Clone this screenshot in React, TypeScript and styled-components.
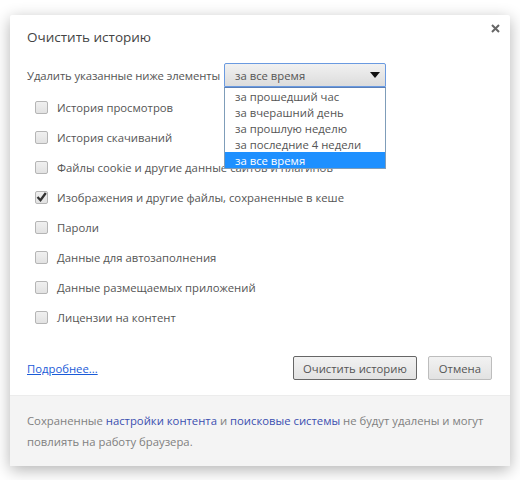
import { createGlobalStyle, styled } from 'styled-components'

const FONT = '"Open Sans", "Noto Sans", sans-serif'

const GlobalStyle = createGlobalStyle`
    html, body {
        margin: 0;
        background: #fff;
    }
    body {
        width: 520px;
        height: 480px;
        overflow: hidden;
        font-family: ${FONT};
    }
`

const items = [
    { label: 'История просмотров' },
    { label: 'История скачиваний' },
    { label: 'Файлы cookie и другие данные сайтов и плагинов' },
    { label: 'Изображения и другие файлы, сохраненные в кеше', checked: true },
    { label: 'Пароли' },
    { label: 'Данные для автозаполнения' },
    { label: 'Данные размещаемых приложений' },
    { label: 'Лицензии на контент' },
]

const periods = ['за прошедший час', 'за вчерашний день', 'за прошлую неделю', 'за последние 4 недели', 'за все время']

export default function App() {
    return (
        <Page>
            <GlobalStyle />
            <Dialog>
                <Close aria-label="Закрыть">
                    <svg width="9" height="9" viewBox="0 0 9 9">
                        <path d="M1 1l7 7M8 1L1 8" stroke="#666" strokeWidth="2" fill="none" />
                    </svg>
                </Close>
                <Body>
                    <Title>Очистить историю</Title>
                    <RangeRow>
                        <RangeLabel>Удалить указанные ниже элементы</RangeLabel>
                        <SelectWrap>
                            <SelectBox>
                                за все время
                                <svg width="10" height="6" viewBox="0 0 10 6">
                                    <path d="M0 0h10L5 6z" fill="#111" />
                                </svg>
                            </SelectBox>
                            <Menu>
                                {periods.map((p, i) => (
                                    <MenuItem key={p} $active={i === periods.length - 1}>
                                        {p}
                                    </MenuItem>
                                ))}
                            </Menu>
                        </SelectWrap>
                    </RangeRow>
                    <List>
                        {items.map((item) => (
                            <Row key={item.label}>
                                <Box>
                                    {item.checked && (
                                        <svg width="11" height="10" viewBox="0 0 11 10">
                                            <path d="M1.5 5L4.5 8.2 9.8 1" stroke="#333" strokeWidth="2.3" fill="none" />
                                        </svg>
                                    )}
                                </Box>
                                {item.label}
                            </Row>
                        ))}
                    </List>
                    <Actions>
                        <MoreLink href="#">Подробнее...</MoreLink>
                        <Button $primary>Очистить историю</Button>
                        <Button>Отмена</Button>
                    </Actions>
                </Body>
                <Footer>
                    Сохраненные <FooterLink>настройки контента</FooterLink> и{' '}
                    <FooterLink>поисковые системы</FooterLink> не будут удалены и могут повлиять на работу браузера.
                </Footer>
            </Dialog>
        </Page>
    )
}

const Page = styled.div`
    height: 480px;
    padding: 15px 10px 14px;
    box-sizing: border-box;
`

const Dialog = styled.div`
    position: relative;
    height: 451px;
    display: flex;
    flex-direction: column;
    background: #fff;
    border-radius: 2px;
    box-shadow: 0 4px 16px rgba(0, 0, 0, 0.3);
    color: #555;
`

const Close = styled.div`
    position: absolute;
    top: 9px;
    right: 10px;
    line-height: 0;
`

const Body = styled.div`
    flex: 1;
    display: flex;
    flex-direction: column;
    padding: 12px 18px 0 17px;
`

const Title = styled.h1`
    margin: 0;
    font-size: 13.5px;
    font-weight: 400;
    line-height: 20px;
    color: #444;
`

const RangeRow = styled.div`
    display: flex;
    align-items: center;
    justify-content: space-between;
    width: 359px;
    margin-top: 16px;
    height: 24px;
    font-size: 11.3px;
    white-space: nowrap;
`

const RangeLabel = styled.span`
    letter-spacing: -0.1px;
`

const SelectWrap = styled.div`
    position: relative;
    width: 162px;
`

const SelectBox = styled.div`
    display: flex;
    align-items: center;
    justify-content: space-between;
    height: 24px;
    box-sizing: border-box;
    padding: 0 5px 0 10px;
    border: 1px solid #6a9ae0;
    border-radius: 2px 2px 0 0;
    background: linear-gradient(#f1f1f1, #dcdcdc);
    font-size: 11.3px;
    color: #555;
`

const Menu = styled.div`
    position: absolute;
    top: 24px;
    left: 0;
    right: 0;
    z-index: 2;
    background: #fff;
    border: 1px solid #7f9db9;
    border-top-color: #5a7fb8;
    box-sizing: border-box;
`

const MenuItem = styled.div<{ $active?: boolean }>`
    height: 16px;
    line-height: 18px;
    padding-left: 10px;
    font-size: 11.3px;
    color: ${(p) => (p.$active ? '#fff' : '#555')};
    background: ${(p) => (p.$active ? '#1e90ff' : 'transparent')};
`

const List = styled.div`
    display: flex;
    flex-direction: column;
    margin-top: 5px;
`

const Row = styled.label`
    display: flex;
    align-items: center;
    gap: 9px;
    height: 30px;
    padding-left: 8px;
    font-size: 11.3px;
`

const Box = styled.span`
    display: flex;
    align-items: center;
    justify-content: center;
    box-sizing: border-box;
    width: 13px;
    height: 13px;
    border: 1px solid #b5b5b5;
    border-radius: 2px;
    background: linear-gradient(#f0f0f0, #e2e2e2);
`

const Actions = styled.div`
    display: flex;
    align-items: center;
    margin-top: 24px;
    gap: 11px;
`

const MoreLink = styled.a`
    margin-right: auto;
    font-size: 11.3px;
    color: #1a5bd8;
`

const Button = styled.button<{ $primary?: boolean }>`
    height: 24px;
    padding: 0 ${(p) => (p.$primary ? '9px' : '10px')};
    font-family: ${FONT};
    font-size: 11.3px;
    color: #555;
    border: 1px solid ${(p) => (p.$primary ? '#666' : '#bdbdbd')};
    border-radius: 2px;
    background: linear-gradient(#f2f2f2, #e2e2e2);
`

const Footer = styled.div`
    height: 71px;
    box-sizing: border-box;
    padding: 14px 17px 0;
    background: #f4f4f4;
    border-top: 1px solid #ececec;
    font-size: 11.3px;
    line-height: 21px;
    color: #808080;
`

const FooterLink = styled.span`
    color: #3b4fb0;
`
